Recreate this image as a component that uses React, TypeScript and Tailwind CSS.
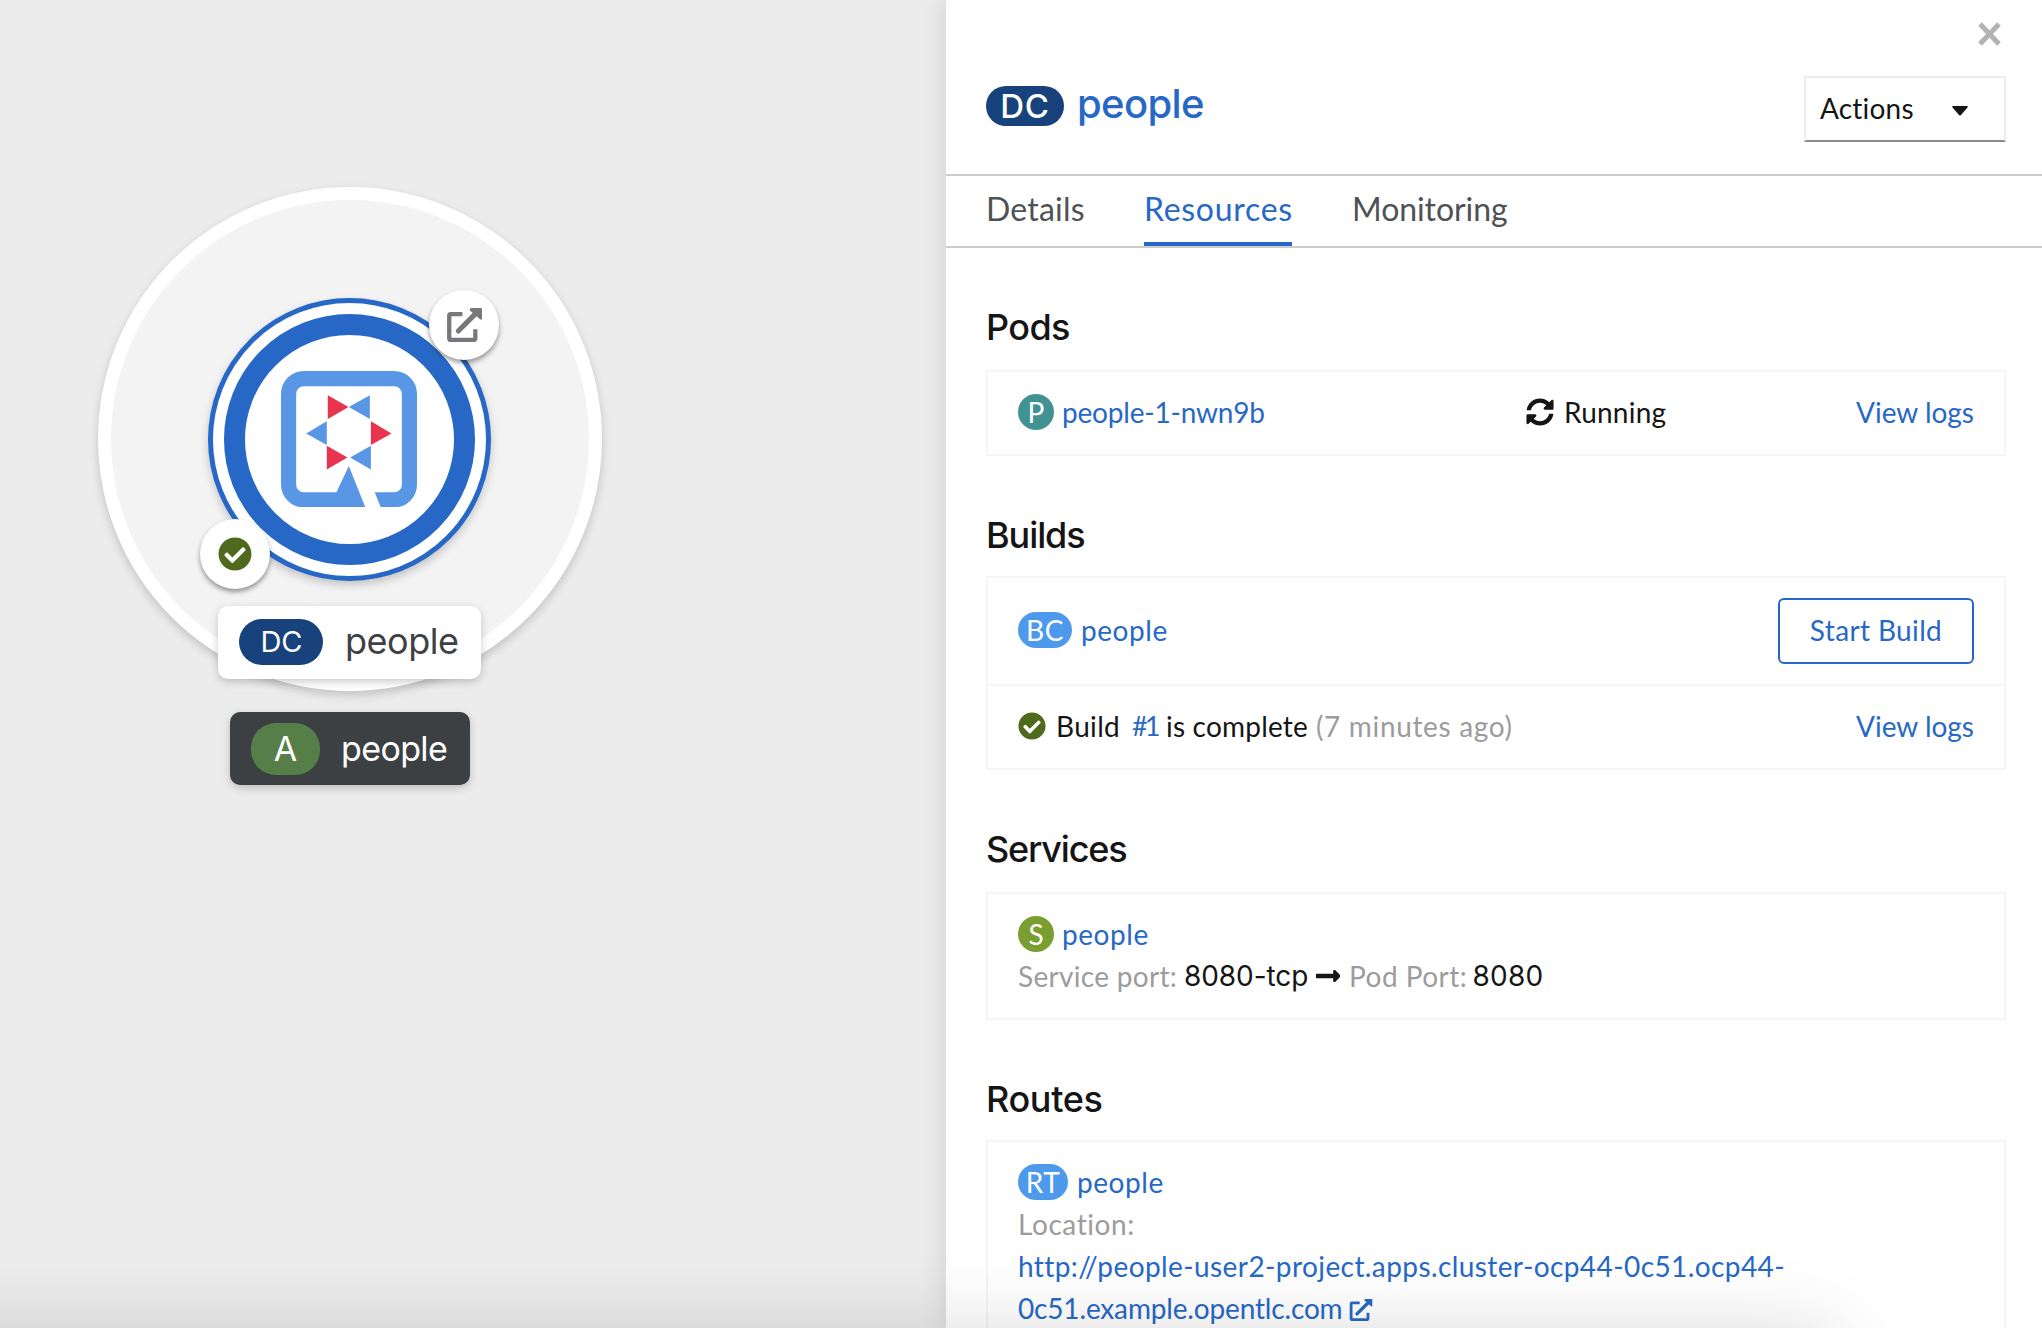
import type { ReactNode } from "react";
import { FaCheckCircle, FaLongArrowAltRight, FaSyncAlt } from "react-icons/fa";

function ExternalLink({ className }: { className: string }) {
  return (
    <svg viewBox="0 0 102 99" className={className} fill="none">
      <path
        d="M45 17.500H11Q6.500 17.500 6.500 22V88Q6.500 93 11 93H77Q82.500 93 82.500 88V62"
        stroke="currentColor"
        strokeWidth="12.500"
      />
      <path d="M33 67L82 18" stroke="currentColor" strokeWidth="15" strokeLinecap="round" />
      <path
        d="M70 0H98Q102 0 102 4V31Q101 36 96 33L67 7Q64 2 70 0Z"
        fill="currentColor"
      />
    </svg>
  );
}

function QuarkusLogo({ className }: { className: string }) {
  return (
    <svg viewBox="0 0 395 396" className={className}>
      <g fill="#5a96e6">
        <path d="M66 0H329A66 66 0 0 1 395 66V330A66 66 0 0 1 329 396H290L272 352H329A22 22 0 0 0 351 330V66A22 22 0 0 0 329 44H66A22 22 0 0 0 44 66V330A22 22 0 0 0 66 352H161L197 276L245 396H66A66 66 0 0 1 0 330V66A66 66 0 0 1 66 0Z" />
        <path d="M258 70V139L197 104.500Z" />
        <path d="M133 146V215L73 181Z" />
        <path d="M261 217V286L201 251Z" />
      </g>
      <g fill="#e9344f">
        <path d="M136 70V139L196 104.500Z" />
        <path d="M261 146V215L321 181Z" />
        <path d="M133 217V286L193 251Z" />
      </g>
    </svg>
  );
}

function Badge({ children, className }: { children: ReactNode; className: string }) {
  return (
    <span className={`block h-9 shrink-0 rounded-[18px] text-center leading-9 text-white ${className}`}>
      {children}
    </span>
  );
}

function Section({
  title,
  titleClass,
  children,
}: {
  title: string;
  titleClass: string;
  children: ReactNode;
}) {
  return (
    <section className="pt-14">
      <h2
        className={`font-['Inter',sans-serif] text-[36px] leading-[46px] font-medium text-[#151515] ${titleClass}`}
      >
        {title}
      </h2>
      <div className="border-2 border-[#f5f5f5]">{children}</div>
    </section>
  );
}

function Canvas() {
  return (
    <main className="relative h-full w-[946px] shrink-0 bg-[#ececec] font-['Inter',sans-serif]">
      <div className="absolute top-[187px] left-[97.5px] size-[504px] rounded-full border-[13.5px] border-white bg-[#f3f3f3] shadow-[0_4px_10px_rgba(0,0,0,0.18)]" />
      <div className="absolute top-[298px] left-[208px] flex size-[283px] items-center justify-center rounded-full border-[5.5px] border-[#2768c6] bg-white shadow-[0_4px_8px_rgba(0,0,0,0.2)]">
        <div className="flex size-[251px] shrink-0 items-center justify-center rounded-full border-[21.5px] border-[#2768c6] pr-px pb-px">
          <QuarkusLogo className="h-[136.5px] w-[136px] shrink-0" />
        </div>
      </div>
      <div className="absolute top-[290px] left-[429px] flex size-[70px] items-center justify-center rounded-full bg-white text-[#77787b] shadow-[0_3px_5px_rgba(0,0,0,0.4)]">
        <ExternalLink className="h-[34px] w-[35px]" />
      </div>
      <div className="absolute top-[519px] left-[200px] flex size-[70px] items-center justify-center rounded-full bg-white text-[#4f6a1c] shadow-[0_3px_5px_rgba(0,0,0,0.4)]">
        <FaCheckCircle className="size-[34px]" />
      </div>
      <div className="absolute top-[606px] left-[218px] flex h-[73px] w-[263px] rounded-[10px] bg-white pl-[21px] shadow-[0_3px_8px_rgba(0,0,0,0.2)]">
        <span className="mt-[13px] h-[46px] w-[84px] rounded-full bg-[#17427c] pl-px text-center text-[29px] leading-[46px] text-white">
          DC
        </span>
        <span className="ml-[22px] text-[36px] leading-[71px] tracking-[-0.48px] text-[#3f4044]">people</span>
      </div>
      <div className="absolute top-[712px] left-[230px] flex h-[73px] w-[240px] rounded-[10px] bg-[#3d4043] pl-[21px] text-[34px] text-white shadow-[0_3px_8px_rgba(0,0,0,0.2)]">
        <span className="mt-[11px] h-[52px] w-[69px] rounded-[25px] bg-[#557e48] text-center leading-[52px]">A</span>
        <span className="ml-[21px] leading-[73px] tracking-[-0.62px]">people</span>
      </div>
    </main>
  );
}

export default function App() {
  return (
    <div className="relative flex h-[1328px] w-[2042px] overflow-hidden bg-white font-['Lato',sans-serif] text-[28px] text-[#151515]">
      <Canvas />
      <aside className="relative h-full w-[1096px] shrink-0 bg-white shadow-[0_0_26px_rgba(0,0,0,0.13)]">
        <header className="h-44 border-b-2 border-[#ccc] pr-9 pl-10">
          <div className="flex h-[76px] justify-end pt-[22px] pr-[5px]">
            <svg viewBox="0 0 23 24" className="h-6 w-[23px]" fill="none">
              <path d="M2 2L21 22M21 2L2 22" stroke="#b3b3b3" strokeWidth="5" />
            </svg>
          </div>
          <div className="flex">
            <span className="mt-2.5 h-10 w-[78px] rounded-full bg-[#17427c] text-center font-['Inter',sans-serif] text-[33px] leading-10 font-medium tracking-[0.8px] text-white">
              DC
            </span>
            <h1 className="mt-2.5 ml-[13px] font-['Inter',sans-serif] text-[40px] leading-9 font-medium tracking-[-0.64px] text-[#2768c6]">
              people
            </h1>
            <button className="ml-auto flex h-[66px] w-[202px] border-2 border-[#ededed] border-b-[#8a8d90] pl-3.5 text-left">
              <span className="w-[132px] leading-[60px] tracking-[0.2px]">Actions</span>
              <svg viewBox="0 0 16 10" className="mt-7 h-2.5 w-4">
                <path d="M0.500 0H15.500Q16 1 15.500 1.500L9 9Q8 10 7 9L0.500 1.500Q0 1 0.500 0Z" fill="#151515" />
              </svg>
            </button>
          </div>
        </header>
        <nav className="flex h-[72px] border-b-2 border-[#ccc] pl-10 text-[32px] leading-[65px] whitespace-nowrap text-[#4f5255]">
          <span className="mr-[60px] w-[98px] tracking-[0.2px]">Details</span>
          <span className="mr-[60px] h-[70px] w-[148px] border-b-4 border-[#2768c6] tracking-[0.7px] text-[#2768c6]">
            Resources
          </span>
          <span className="tracking-[-0.07px]">Monitoring</span>
        </nav>
        <div className="pr-9 pl-10 whitespace-nowrap">
          <Section title="Pods" titleClass="mb-5 tracking-[-0.6px]">
            <div className="flex h-[82px] px-[30px] pt-[22px] leading-9">
              <div className="flex w-[508px] gap-2">
                <Badge className="w-9 bg-[#419393]">P</Badge>
                <span className="tracking-[-0.2px] text-[#2768c6]">people-1-nwn9b</span>
              </div>
              <FaSyncAlt className="mt-1 size-7" />
              <span className="ml-2.5 tracking-[0.22px]">Running</span>
              <span className="ml-auto text-[#2768c6]">View logs</span>
            </div>
          </Section>
          <Section title="Builds" titleClass="mb-[18px] tracking-[-1.08px]">
            <div className="flex h-[108px] border-b-2 border-[#f5f5f5] px-[30px]">
              <Badge className="mt-[34px] w-[54px] bg-[#4d9aec] tracking-[0.5px]">BC</Badge>
              <span className="mt-[34px] ml-[9px] leading-9 tracking-[0.57px] text-[#2768c6]">people</span>
              <button className="mt-5 ml-auto h-[66px] w-[196px] rounded-md border-2 border-[#2768c6] pb-0.5 leading-[58px] tracking-[0.36px] text-[#2768c6]">
                Start Build
              </button>
            </div>
            <div className="flex h-[82px] px-[30px] pt-[22px] leading-9">
              <FaCheckCircle className="mt-1 size-7 text-[#4f6a1c]" />
              <span className="ml-2.5 w-[76px] tracking-[0.34px]">Build</span>
              <span className="w-[34px] text-[27px] tracking-[-3px] text-[#2768c6]">#1</span>
              <span className="tracking-[0.2px]">is complete</span>
              <span className="ml-2 tracking-[0.66px] text-[#9c9c9c]">(7 minutes ago)</span>
              <span className="ml-auto text-[#2768c6]">View logs</span>
            </div>
          </Section>
          <Section title="Services" titleClass="mb-5 tracking-[-1.2px]">
            <div className="h-[124px] px-[30px] pt-[22px]">
              <div className="flex gap-2 leading-9">
                <Badge className="w-9 bg-[#7a9f30]">S</Badge>
                <span className="tracking-[0.57px] text-[#2768c6]">people</span>
              </div>
              <div className="mt-0.5 flex leading-[44px]">
                <span className="w-[166px] tracking-[0.31px] text-[#9c9c9c]">Service port:</span>
                <span className="w-[131.5px] font-['Inter',sans-serif] tracking-[-0.08px]">8080-tcp</span>
                <FaLongArrowAltRight className="mt-2 h-7 w-[24.5px]" />
                <span className="ml-[9px] w-[123.5px] tracking-[0.47px] text-[#9c9c9c]">Pod Port:</span>
                <span className="font-['Inter',sans-serif] tracking-[0.2px]">8080</span>
              </div>
            </div>
          </Section>
          <Section title="Routes" titleClass="mb-[18px] tracking-[-0.36px]">
            <div className="h-[260px] px-[30px] pt-[22px]">
              <div className="flex gap-[9px] leading-9">
                <Badge className="w-[50px] bg-[#4d9aec] tracking-[0.6px]">RT</Badge>
                <span className="tracking-[0.57px] text-[#2768c6]">people</span>
              </div>
              <div className="mt-[3px] leading-[42px] tracking-[0.58px] text-[#9c9c9c]">Location:</div>
              <div className="leading-[42px] text-[#2768c6]">
                <div className="tracking-[0.41px]">http://people-user2-project.apps.cluster-ocp44-0c51.ocp44-</div>
                <div className="flex tracking-[-0.16px]">
                  <span className="w-[331px]">0c51.example.opentlc.com</span>
                  <ExternalLink className="mt-3 h-[22px] w-6" />
                </div>
              </div>
            </div>
          </Section>
        </div>
      </aside>
      <div className="pointer-events-none absolute top-[1340px] -left-52 h-96 w-[2040px] shadow-[0_0_80px_rgba(0,0,0,0.185)]" />
    </div>
  );
}
